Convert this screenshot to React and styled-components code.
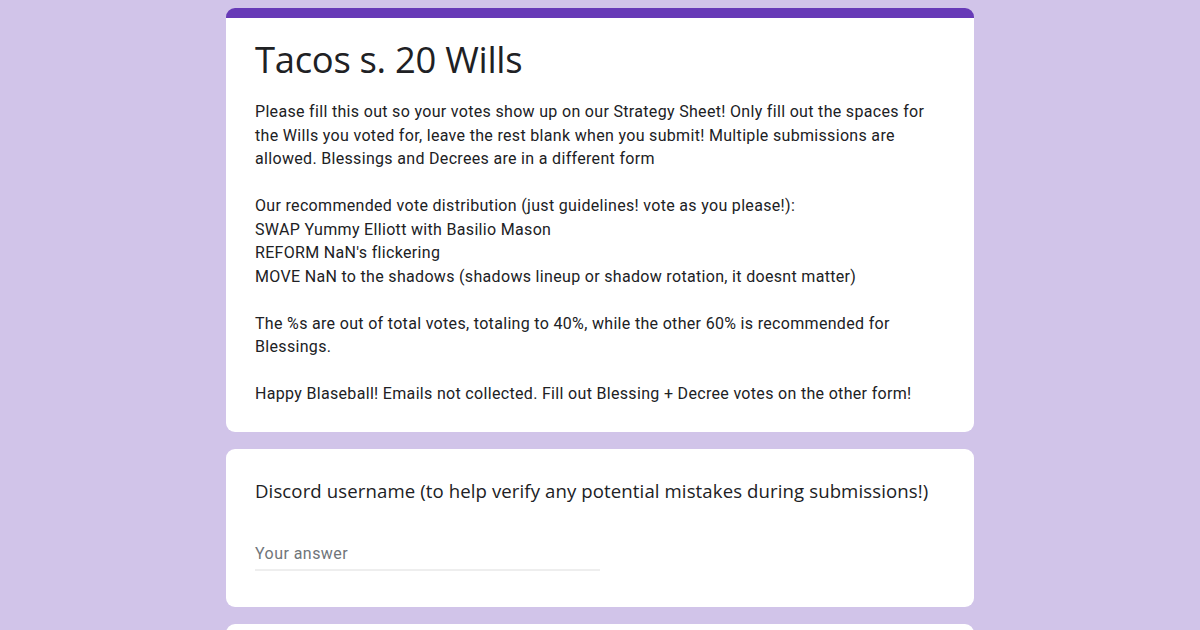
import React from 'react';
import styled, { createGlobalStyle } from 'styled-components';

const GlobalStyle = createGlobalStyle`
	html, body {
		margin: 0;
		padding: 0;
		background-color: #d1c4e9;
	}
	* {
		box-sizing: border-box;
	}
`;

const Page = styled.div`
	min-height: 630px;
	padding-top: 8px;
	display: flex;
	flex-direction: column;
	align-items: center;
	gap: 17px;
	background-color: #d1c4e9;
	font-family: Roboto, "Liberation Sans", sans-serif;
	color: #202124;
`;

const Card = styled.div`
	width: 748px;
	background-color: #ffffff;
	border-radius: 9px;
	border-top: ${(p) => (p.$accent ? '10px solid #673ab7' : 'none')};
	padding: ${(p) => (p.$accent ? '17px 29px 26px' : '28px 29px 36px')};
	flex-shrink: 0;
`;

const Title = styled.h1`
	margin: 0;
	font-family: "Open Sans", Roboto, sans-serif;
	font-weight: 400;
	font-size: 36.4px;
	line-height: 48px;
	letter-spacing: -0.3px;
	color: #202124;
`;

const Description = styled.div`
	margin-top: 17px;
	font-size: 16px;
	line-height: 23.5px;
	letter-spacing: 0.32px;
	color: #202124;
`;

const Para = styled.p`
	margin: 0;
	& + & {
		margin-top: 23.5px;
	}
`;

const Question = styled.div`
	font-family: "Open Sans", Roboto, sans-serif;
	font-size: 18.6px;
	line-height: 28px;
	letter-spacing: 0.1px;
	color: #202124;
`;

const AnswerField = styled.div`
	margin-top: 38px;
	width: 345px;
	padding-bottom: 4px;
	border-bottom: 2px solid #eeeeee;
	font-size: 16px;
	line-height: 22px;
	letter-spacing: 0.45px;
	color: #70757a;
`;

const StubCard = styled(Card)`
	height: 40px;
	padding: 0;
`;

export default function App() {
	return (
		<>
			<GlobalStyle />
			<Page>
				<Card $accent>
					<Title>Tacos s. 20 Wills</Title>
					<Description>
						<Para>
							Please fill this out so your votes show up on our Strategy Sheet! Only fill out the spaces for
							<br />
							the Wills you voted for, leave the rest blank when you submit! Multiple submissions are
							<br />
							allowed. Blessings and Decrees are in a different form
						</Para>
						<Para>
							Our recommended vote distribution (just guidelines! vote as you please!):
							<br />
							SWAP Yummy Elliott with Basilio Mason
							<br />
							REFORM NaN's flickering
							<br />
							MOVE NaN to the shadows (shadows lineup or shadow rotation, it doesnt matter)
						</Para>
						<Para>
							The %s are out of total votes, totaling to 40%, while the other 60% is recommended for
							<br />
							Blessings.
						</Para>
						<Para>
							Happy Blaseball! Emails not collected. Fill out Blessing + Decree votes on the other form!
						</Para>
					</Description>
				</Card>
				<Card>
					<Question>Discord username (to help verify any potential mistakes during submissions!)</Question>
					<AnswerField>Your answer</AnswerField>
				</Card>
				<StubCard />
			</Page>
		</>
	);
}
